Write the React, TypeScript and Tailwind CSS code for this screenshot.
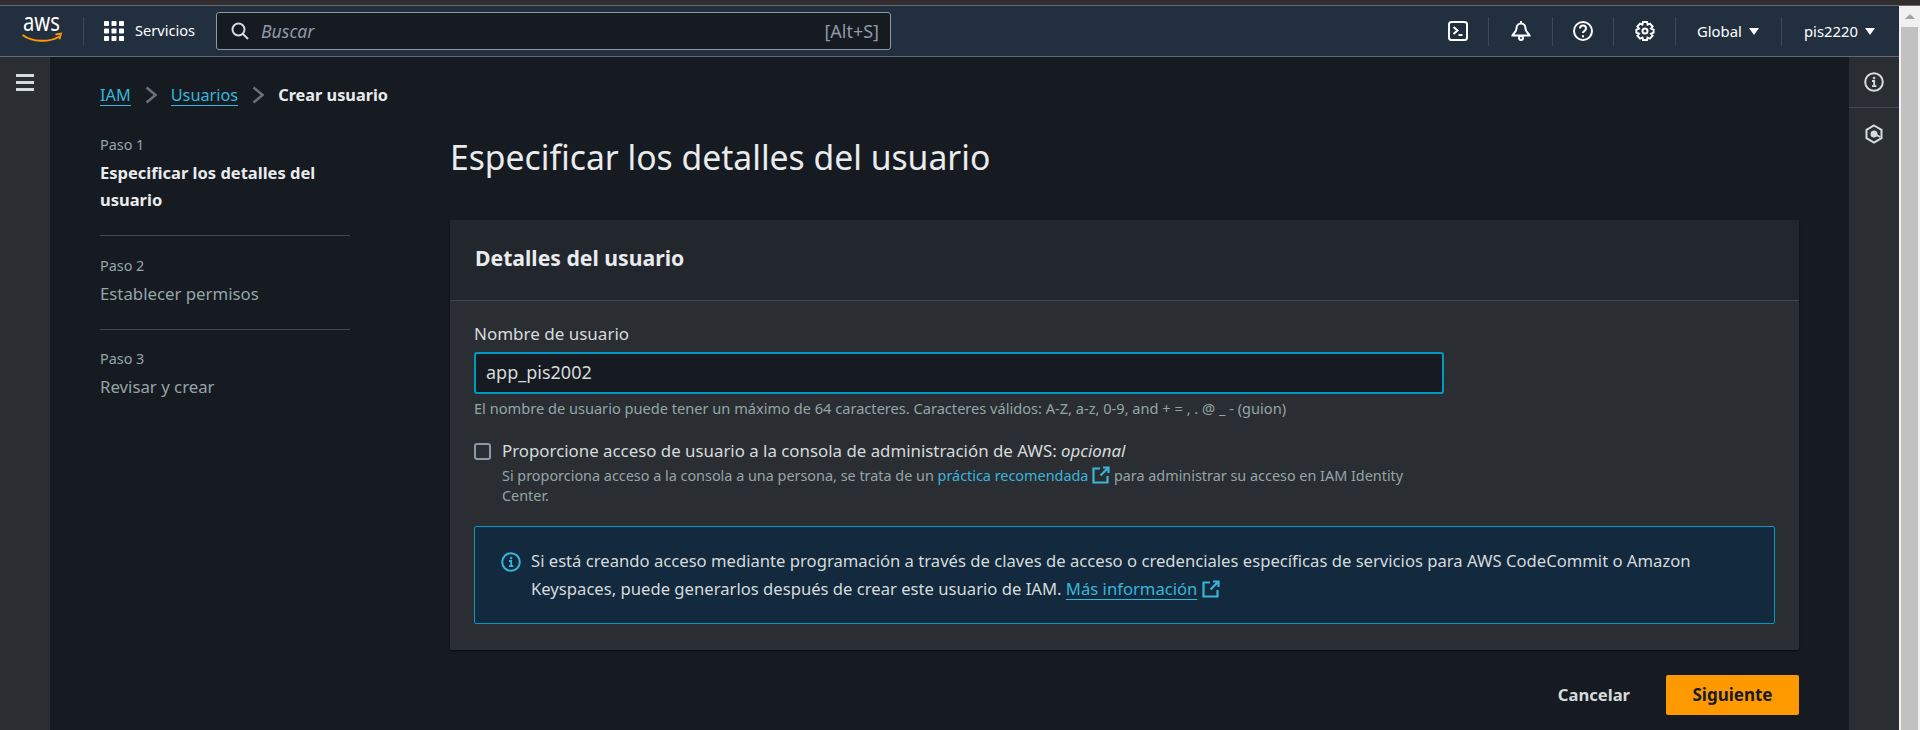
const font = "font-['Noto_Sans',sans-serif]";

function ExternalIcon({ size = 18 }: { size?: number }) {
  return (
    <svg viewBox="0 0 18 18" width={size} height={size} fill="none" stroke="currentColor" strokeWidth="2.2" className="inline-block align-[-3px]">
      <path d="M8 2.500H1.500v14h14V10" />
      <path d="M11 1.500h5.500V7M16 2L8.500 9.500" />
    </svg>
  );
}

function InfoIcon({ className }: { className?: string }) {
  return (
    <svg viewBox="0 0 20 20" fill="none" stroke="currentColor" className={className}>
      <circle cx="10" cy="10" r="8.800" strokeWidth="2" />
      <path d="M8 9h2.200v5M8 14.200h4.400" strokeWidth="1.800" />
      <path d="M9.200 5.200h1.800v1.800H9.200z" fill="currentColor" strokeWidth="0.5" />
    </svg>
  );
}

function Divider() {
  return <div className="h-[29px] w-px bg-[#414750]" />;
}

function Caret() {
  return <span className="h-0 w-0 border-x-[5px] border-t-[7px] border-x-transparent border-t-white" />;
}

function TopNav() {
  return (
    <header className="flex h-[51px] items-center border-b border-[#5f6b7a] bg-[#222f3f] text-white">
      <div className="flex w-[83px] pl-[22px]">
        <svg viewBox="0 0 41 28" width="41" height="28" fill="none" className="overflow-visible">
          <text x="1" y="14" fill="#fff" fontSize="25" fontFamily="Noto Sans, sans-serif" textLength="37" lengthAdjust="spacingAndGlyphs">aws</text>
          <path d="M0.500 18c10 7.500 27 7.500 37 1.500" stroke="#f90" strokeWidth="2" />
          <path d="M33.500 17.500l5.500-.8-1.500 5.500" stroke="#f90" strokeWidth="1.800" />
        </svg>
      </div>
      <div className="h-[29px] w-px bg-[#414750]" />
      <svg viewBox="0 0 20 20" width="20" height="20" fill="#fff" className="ml-[20px]">
        {[0, 7.5, 15].map((y) =>
          [0, 7.5, 15].map((x) => <rect key={`${x}-${y}`} x={x} y={y} width="5" height="5" rx="0.8" />),
        )}
      </svg>
      <span className="ml-[11px] text-[14.6px]">Servicios</span>
      <div className="ml-[21px] flex h-[38px] w-[675px] items-center rounded-[3px] border border-[#8d99a8] bg-[#161a21] pl-[14px] pr-[11px]">
        <svg viewBox="0 0 18 18" width="18" height="18" fill="none" stroke="#d5dbdb" strokeWidth="2">
          <circle cx="7.500" cy="7.500" r="6" />
          <path d="M12 12l5 5" />
        </svg>
        <span className="ml-[12px] flex-1 text-[17.6px] italic text-[#8d99a8]">Buscar</span>
        <span className="text-[18px] text-[#8d99a8]">[Alt+S]</span>
      </div>
      <div className="ml-auto flex h-full items-center">
        <div className="flex w-[60px] justify-center">
          <svg viewBox="0 0 20 20" width="20" height="20" fill="none" stroke="#fff" strokeWidth="2">
            <rect x="1" y="1" width="18" height="18" rx="2.500" />
            <path d="M5.500 6l4 3.500-4 3.500M10.500 14h4" />
          </svg>
        </div>
        <Divider />
        <div className="flex w-[63px] justify-center">
          <svg viewBox="0 0 20 20" width="20" height="20" fill="none" stroke="#fff" strokeWidth="2">
            <path d="M10 2.500c-3 0-4.500 2.500-4.500 5 0 3.500-3.500 5-4 7h17c-.5-2-4-3.500-4-7 0-2.500-1.500-5-4.500-5z" />
            <path d="M10 0v2.500" />
            <circle cx="10" cy="17" r="2" />
          </svg>
        </div>
        <Divider />
        <div className="flex w-[60px] justify-center">
          <svg viewBox="0 0 20 20" width="20" height="20" fill="none" stroke="#fff" strokeWidth="2">
            <circle cx="10" cy="10" r="9" />
            <path d="M7 7.500c0-4 6-4 6 0 0 2.500-3 2.500-3 4.500" />
            <path d="M9 14.200h2v2H9z" fill="#fff" stroke="none" />
          </svg>
        </div>
        <Divider />
        <div className="flex w-[61px] justify-center">
          <svg viewBox="0 0 20 20" width="20" height="20" fill="none" stroke="#fff" strokeWidth="2">
            <circle cx="10" cy="10" r="2.500" />
            <path d="M8 1h4l.6 2.600 2.400-1 2.600 3-1.600 2 2.600 1v3l-2.600 1 1.600 2-2.600 3-2.400-1L12 19H8l-.6-2.400-2.400 1-2.600-3 1.600-2-2.600-1V8.600l2.600-1-1.600-2 2.600-3 2.400 1z" />
          </svg>
        </div>
        <Divider />
        <div className="flex w-[105px] items-center gap-[7px] pl-[21px] text-[14.8px]">
          Global
          <Caret />
        </div>
        <Divider />
        <div className="flex w-[117px] items-center gap-[7px] pl-[22px] text-[14.8px]">
          pis2220
          <Caret />
        </div>
      </div>
    </header>
  );
}

function Step({ label, title, active, last }: { label: string; title: string; active?: boolean; last?: boolean }) {
  return (
    <li className={last ? "" : "mb-[19.5px] border-b border-[#414750] pb-[22px]"}>
      <div className="text-[14.4px] leading-[20px] text-[#95a5a6]">{label}</div>
      <div className={active ? "mt-[4px] text-[16.5px] font-bold leading-[27px] text-[#e9ebed]" : "mt-[4px] text-[16.8px] leading-[27px] text-[#95a5a6]"}>{title}</div>
    </li>
  );
}

function Breadcrumb() {
  const chevron = (
    <svg viewBox="0 0 12 18" width="12" height="18" fill="none" stroke="#687078" strokeWidth="2.500">
      <path d="M1.500 1.500l9 7.500-9 7.500" />
    </svg>
  );
  return (
    <nav className="flex items-center text-[16.3px] leading-[24px]">
      <a className="border-b border-[#39b5d9] leading-[20px] text-[#39b5d9]">IAM</a>
      <span className="mx-[14px]">{chevron}</span>
      <a className="border-b border-[#39b5d9] leading-[20px] text-[#39b5d9]">Usuarios</a>
      <span className="mx-[14px]">{chevron}</span>
      <span className="font-bold text-[#e9ebed]">Crear usuario</span>
    </nav>
  );
}

function Card() {
  return (
    <section className="rounded-[2px] bg-[#2a2e33] shadow-[0_1px_2px_#0b0d11]">
      <div className="flex h-[81px] items-center border-b border-[#414750] bg-[#22262d] pb-[4px] pl-[25px] pr-[24px] text-[21.2px] font-bold text-[#e9ebed]">
        Detalles del usuario
      </div>
      <div className="px-[24px] pb-[26px] pt-[21px]">
        <label className="block text-[17px] leading-[24px] text-[#d5dbdb]">Nombre de usuario</label>
        <div className="mt-[6px] flex h-[42px] w-[970px] items-center rounded-[3px] border-2 border-[#0099c4] bg-[#161a21] px-[10px] pb-[1px] text-[18px] text-[#d5dbdb]">
          app_pis2002
        </div>
        <p className="mt-[4px] text-[14.6px] leading-[20px] text-[#95a5a6]">
          El nombre de usuario puede tener un máximo de 64 caracteres. Caracteres válidos: A-Z, a-z, 0-9, and + = , . @ _ - (guion)
        </p>
        <div className="mt-[21px] flex">
          <span className="mt-[4px] h-[17px] w-[17px] rounded-[3px] border-2 border-[#8d99a8]" />
          <div className="ml-[11px] w-[920px]">
            <div className="text-[16.85px] leading-[24px] text-[#d5dbdb]">
              Proporcione acceso de usuario a la consola de administración de AWS: <em>opcional</em>
            </div>
            <p className="mt-[3px] text-[14.4px] leading-[20px] text-[#95a5a6]">
              Si proporciona acceso a la consola a una persona, se trata de un{" "}
              <span className="text-[#39b5d9]">práctica recomendada <ExternalIcon /></span>{" "}
              para administrar su acceso en IAM Identity Center.
            </p>
          </div>
        </div>
        <div className="mt-[20px] flex h-[98px] items-start rounded-[2px] border border-[#0099c4] bg-[#12293e] pl-[26px] pt-[20px]">
          <InfoIcon className="mt-[5px] h-[20px] w-[20px] shrink-0 text-[#39b5d9]" />
          <p className="ml-[10px] w-[1220px] text-[16.65px] leading-[28px] text-[#d5dbdb]">
            Si está creando acceso mediante programación a través de claves de acceso o credenciales específicas de servicios para AWS CodeCommit o Amazon Keyspaces, puede generarlos después de crear este usuario de IAM.{" "}
            <span className="text-[#39b5d9]"><span className="underline underline-offset-4">Más información</span> <ExternalIcon /></span>
          </p>
        </div>
      </div>
    </section>
  );
}

export default function App() {
  return (
    <div className={`flex h-[730px] w-[1920px] flex-col overflow-hidden bg-[#161a21] ${font}`}>
      <div className="h-[6px] shrink-0 border-b border-[#6b6b6b] bg-[#332d31]" />
      <div className="flex min-h-0 flex-1">
        <div className="flex min-w-0 flex-1 flex-col">
          <TopNav />
          <div className="flex min-h-0 flex-1">
            <aside className="flex w-[50px] justify-center bg-[#2a2e33] pt-[17px]">
              <svg viewBox="0 0 18 17" width="18" height="17" fill="#d5dbdb">
                <rect width="18" height="3" />
                <rect y="7" width="18" height="3" />
                <rect y="14" width="18" height="3" />
              </svg>
            </aside>
            <main className="min-w-0 flex-1 px-[50px] pt-[26px]">
              <Breadcrumb />
              <div className="mt-[28px] flex">
                <ol className="w-[250px]">
                  <Step label="Paso 1" title="Especificar los detalles del usuario" active />
                  <Step label="Paso 2" title="Establecer permisos" />
                  <Step label="Paso 3" title="Revisar y crear" last />
                </ol>
                <div className="ml-[100px] flex-1 pt-[2px]">
                  <h1 className="text-[33.7px] leading-[40px] text-[#e9ebed]">Especificar los detalles del usuario</h1>
                  <div className="mt-[43px]">
                    <Card />
                  </div>
                  <div className="mt-[25px] flex items-center justify-end">
                    <span className="mr-[36px] text-[16.6px] font-bold text-[#d5dbdb]">Cancelar</span>
                    <span className="flex h-[40px] w-[133px] items-center justify-center rounded-[2px] bg-[#ff9900] text-[17px] font-bold text-[#161a21]">Siguiente</span>
                  </div>
                </div>
              </div>
            </main>
            <aside className="w-[50px] bg-[#2a2e33] text-[#d5dbdb]">
              <div className="flex h-[51px] items-center justify-center border-b border-[#414750]">
                <InfoIcon className="h-[20px] w-[20px]" />
              </div>
              <div className="flex h-[51px] items-center justify-center">
                <svg viewBox="0 0 20 20" width="20" height="20" fill="none" stroke="currentColor" strokeWidth="2">
                  <path d="M10 1.500l7.500 4.300v8.400L10 18.500l-7.500-4.300V5.800z" />
                  <circle cx="10" cy="10" r="2.500" fill="currentColor" />
                  <path d="M11 10l5 3" />
                </svg>
              </div>
            </aside>
          </div>
        </div>
        <div className="flex w-[21px] flex-col bg-[#f1f1f1]">
          <div className="flex h-[21px] items-center justify-center">
            <span className="h-0 w-0 border-x-[5px] border-b-[5px] border-x-transparent border-b-[#a3a3a3]" />
          </div>
          <div className="mx-[2px] flex-1 bg-[#c1c1c1]" />
        </div>
      </div>
    </div>
  );
}
